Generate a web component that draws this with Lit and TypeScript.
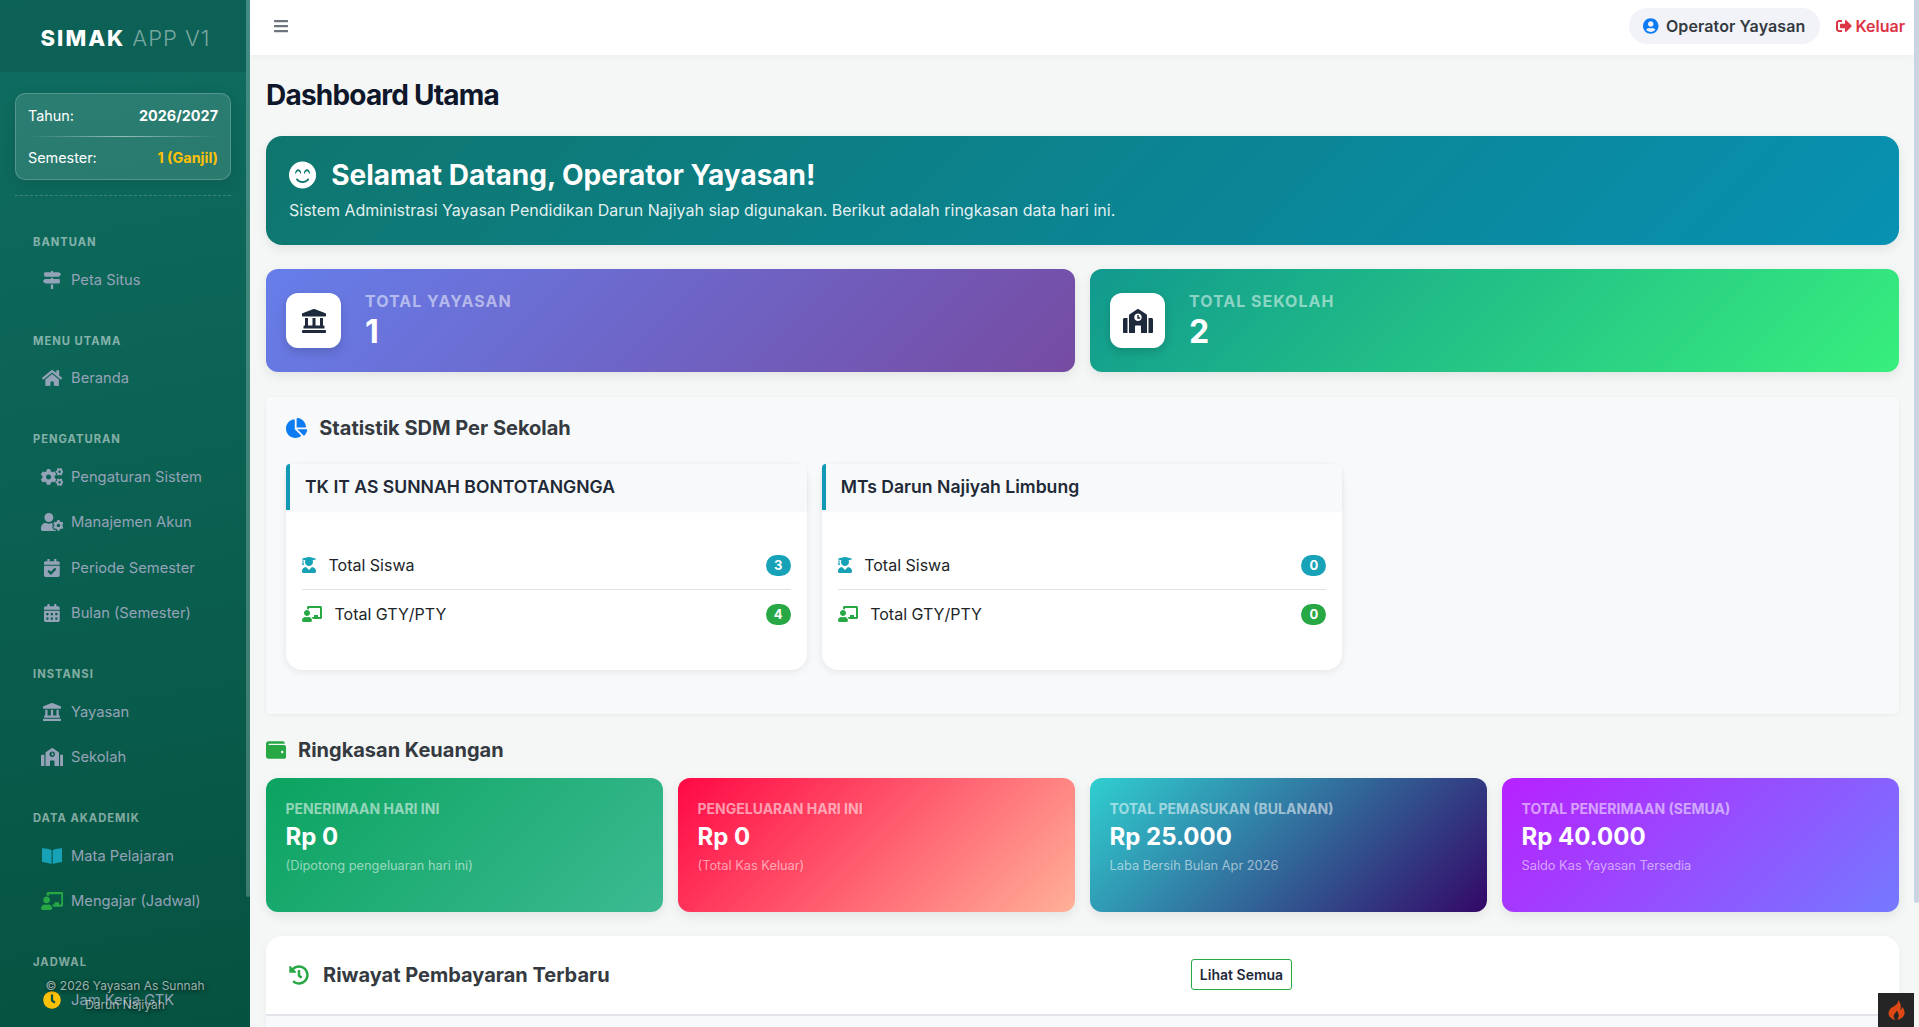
import { LitElement, html, css } from "lit";
import { customElement } from "lit/decorators.js";

// Font Awesome 5 solid shapes, [viewBox width, path]
const ICONS: Record<string, [number, string]> = {
  signs: [512, "M507.31 84.69L464 41.37c-6-6-14.14-9.37-22.63-9.37H288V16c0-8.84-7.16-16-16-16h-32c-8.84 0-16 7.16-16 16v16H56c-13.25 0-24 10.75-24 24v80c0 13.25 10.75 24 24 24h385.37c8.49 0 16.62-3.37 22.63-9.37l43.31-43.31c6.25-6.26 6.25-16.38 0-22.63zM224 496c0 8.84 7.16 16 16 16h32c8.84 0 16-7.16 16-16V384h-64v112zm232-272H288v-32h-64v32H70.63c-8.49 0-16.62 3.37-22.63 9.37L4.69 276.69c-6.25 6.25-6.25 16.38 0 22.63L48 342.63c6 6 14.14 9.37 22.63 9.37H456c13.25 0 24-10.75 24-24v-80c0-13.25-10.75-24-24-24z"],
  home: [576, "M280.37 148.26L96 300.11V464a16 16 0 0 0 16 16l112.06-.29a16 16 0 0 0 15.92-16V368a16 16 0 0 1 16-16h64a16 16 0 0 1 16 16v95.64a16 16 0 0 0 16 16.05L464 480a16 16 0 0 0 16-16V300L295.67 148.26a12.19 12.19 0 0 0-15.3 0zM571.6 251.47L488 182.56V44.05a12 12 0 0 0-12-12h-56a12 12 0 0 0-12 12v72.61L318.47 43a48 48 0 0 0-61 0L4.34 251.47a12 12 0 0 0-1.6 16.9l25.5 31A12 12 0 0 0 45.15 301l235.22-193.74a12.19 12.19 0 0 1 15.3 0L530.9 301a12 12 0 0 0 16.9-1.6l25.5-31a12 12 0 0 0-1.7-16.93z"],
  cogs: [640, "M512.1 191l-8.2 14.3c-3 5.3-9.4 7.5-15.1 5.4-11.8-4.4-22.6-10.7-32.1-18.6-4.6-3.8-5.8-10.5-2.8-15.7l8.2-14.3c-6.9-8-12.3-17.3-15.9-27.4h-16.5c-6 0-11.2-4.3-12.2-10.3-2-12-2.1-24.6 0-37.1 1-6 6.2-10.4 12.2-10.4h16.5c3.6-10.1 9-19.4 15.9-27.4l-8.2-14.3c-3-5.2-1.9-11.9 2.8-15.7 9.5-7.9 20.4-14.2 32.1-18.6 5.7-2.1 12.1.1 15.1 5.4l8.2 14.3c10.5-1.9 21.2-1.9 31.7 0L552 6.3c3-5.3 9.4-7.5 15.1-5.4 11.8 4.4 22.6 10.7 32.1 18.6 4.6 3.8 5.8 10.5 2.8 15.7l-8.2 14.3c6.9 8 12.3 17.3 15.9 27.4h16.5c6 0 11.2 4.3 12.2 10.3 2 12 2.1 24.6 0 37.1-1 6-6.2 10.4-12.2 10.4h-16.5c-3.6 10.1-9 19.4-15.9 27.4l8.2 14.3c3 5.2 1.9 11.9-2.8 15.7-9.5 7.9-20.4 14.2-32.1 18.6-5.7 2.1-12.1-.1-15.1-5.4l-8.2-14.3c-10.4 1.9-21.2 1.9-31.7 0zm-10.5-58.8c38.5 29.6 82.4-14.3 52.8-52.8-38.5-29.7-82.4 14.3-52.8 52.8zM386.3 286.1l33.7 16.8c10.1 5.8 14.5 18.1 10.5 29.1-8.9 24.2-26.4 46.4-42.6 65.8-7.4 8.9-20.2 11.1-30.3 5.3l-29.1-16.8c-16 13.7-34.6 24.6-54.9 31.7v33.6c0 11.6-8.3 21.6-19.7 23.6-24.6 4.2-50.4 4.4-75.9 0-11.5-2-20-11.9-20-23.6V418c-20.3-7.2-38.9-18-54.9-31.7L74 403c-10 5.8-22.9 3.6-30.3-5.3-16.2-19.4-33.3-41.6-42.2-65.7-4-10.9.4-23.2 10.5-29.1l33.3-16.8c-3.9-20.9-3.9-42.4 0-63.4L12 205.8c-10.1-5.8-14.6-18.1-10.5-29 8.9-24.2 26-46.4 42.2-65.8 7.4-8.9 20.2-11.1 30.3-5.3l29.1 16.8c16-13.7 34.6-24.6 54.9-31.7V57.1c0-11.5 8.2-21.5 19.6-23.5 24.6-4.2 50.5-4.4 76-.1 11.5 2 20 11.9 20 23.6v33.6c20.3 7.2 38.9 18 54.9 31.7l29.1-16.8c10-5.8 22.9-3.6 30.3 5.3 16.2 19.4 33.2 41.6 42.1 65.8 4 10.9.1 23.2-10 29.1l-33.7 16.8c3.9 21 3.9 42.5 0 63.5zm-117.6 21.1c59.2-77-28.7-164.9-105.7-105.7-59.2 77 28.7 164.9 105.7 105.7zm243.4 182.7l-8.2 14.3c-3 5.3-9.4 7.5-15.1 5.4-11.8-4.4-22.6-10.7-32.1-18.6-4.6-3.8-5.8-10.5-2.8-15.7l8.2-14.3c-6.9-8-12.3-17.3-15.9-27.4h-16.5c-6 0-11.2-4.3-12.2-10.3-2-12-2.1-24.6 0-37.1 1-6 6.2-10.4 12.2-10.4h16.5c3.6-10.1 9-19.4 15.9-27.4l-8.2-14.3c-3-5.2-1.9-11.9 2.8-15.7 9.5-7.9 20.4-14.2 32.1-18.6 5.7-2.1 12.1.1 15.1 5.4l8.2 14.3c10.5-1.9 21.2-1.9 31.7 0l8.2-14.3c3-5.3 9.4-7.5 15.1-5.4 11.8 4.4 22.6 10.7 32.1 18.6 4.6 3.8 5.8 10.5 2.8 15.7l-8.2 14.3c6.9 8 12.3 17.3 15.9 27.4h16.5c6 0 11.2 4.3 12.2 10.3 2 12 2.1 24.6 0 37.1-1 6-6.2 10.4-12.2 10.4h-16.5c-3.6 10.1-9 19.4-15.9 27.4l8.2 14.3c3 5.2 1.9 11.9-2.8 15.7-9.5 7.9-20.4 14.2-32.1 18.6-5.7 2.1-12.1-.1-15.1-5.4l-8.2-14.3c-10.4 1.9-21.2 1.9-31.7 0zM501.6 431c38.5 29.6 82.4-14.3 52.8-52.8-38.5-29.6-82.4 14.3-52.8 52.8z"],
  userCog: [640, "M610.5 373.3c2.6-14.1 2.6-28.5 0-42.6l25.8-14.9c3-1.7 4.3-5.2 3.3-8.5-6.7-21.6-18.2-41.2-33.2-57.4-2.3-2.5-6-3.1-9-1.4l-25.8 14.9c-10.9-9.3-23.4-16.5-36.9-21.3v-29.8c0-3.4-2.4-6.4-5.7-7.1-22.3-5-45-4.8-66.2 0-3.3.7-5.7 3.7-5.7 7.1v29.8c-13.5 4.8-26 12-36.9 21.3l-25.8-14.9c-2.9-1.7-6.7-1.1-9 1.4-15 16.2-26.5 35.8-33.2 57.4-1 3.3.4 6.8 3.3 8.5l25.8 14.9c-2.6 14.1-2.6 28.5 0 42.6l-25.8 14.9c-3 1.7-4.3 5.2-3.3 8.5 6.7 21.6 18.2 41.1 33.2 57.4 2.3 2.5 6 3.1 9 1.4l25.8-14.9c10.9 9.3 23.4 16.5 36.9 21.3v29.8c0 3.4 2.4 6.4 5.7 7.1 22.3 5 45 4.8 66.2 0 3.3-.7 5.7-3.7 5.7-7.1v-29.8c13.5-4.8 26-12 36.9-21.3l25.8 14.9c2.9 1.7 6.7 1.1 9-1.4 15-16.2 26.5-35.8 33.2-57.4 1-3.3-.4-6.8-3.3-8.5l-25.8-14.9zM496 400.5c-26.8 0-48.5-21.8-48.5-48.5s21.8-48.5 48.5-48.5 48.5 21.8 48.5 48.5-21.7 48.5-48.5 48.5zM224 256c70.7 0 128-57.3 128-128S294.7 0 224 0 96 57.3 96 128s57.3 128 128 128zm201.2 226.5c-2.3-1.2-4.6-2.6-6.8-3.9l-7.9 4.6c-6 3.4-12.8 5.3-19.6 5.3-10.9 0-21.4-4.6-28.9-12.6-18.3-19.8-32.3-43.9-40.2-69.6-5.5-17.7 1.9-36.4 17.9-45.7l7.9-4.6c-.1-2.6-.1-5.2 0-7.8l-7.9-4.6c-16-9.2-23.4-28-17.9-45.7.9-2.9 2.2-5.8 3.2-8.7-3.8-.3-7.5-1.2-11.4-1.2h-16.7c-22.2 10.2-46.9 16-72.9 16s-50.6-5.8-72.9-16h-16.7C60.2 288 0 348.2 0 422.4V464c0 26.5 21.5 48 48 48h352c10.1 0 19.5-3.2 27.2-8.5-1.2-3.8-2-7.7-2-11.8v-9.2z"],
  calCheck: [448, "M436 160H12c-6.627 0-12-5.373-12-12v-36c0-26.51 21.49-48 48-48h48V12c0-6.627 5.373-12 12-12h40c6.627 0 12 5.373 12 12v52h128V12c0-6.627 5.373-12 12-12h40c6.627 0 12 5.373 12 12v52h48c26.51 0 48 21.49 48 48v36c0 6.627-5.373 12-12 12zM12 192h424c6.627 0 12 5.373 12 12v260c0 26.51-21.49 48-48 48H48c-26.51 0-48-21.49-48-48V204c0-6.627 5.373-12 12-12zm333.296 95.947l-28.169-28.398c-4.667-4.705-12.265-4.736-16.97-.068L194.12 364.665l-45.98-46.352c-4.667-4.705-12.266-4.736-16.971-.068l-28.397 28.17c-4.705 4.667-4.736 12.265-.068 16.97l82.601 83.269c4.667 4.705 12.265 4.736 16.97.068l142.953-141.805c4.705-4.667 4.736-12.265.068-16.97z"],
  calAlt: [448, "M0 464c0 26.5 21.5 48 48 48h352c26.5 0 48-21.5 48-48V192H0v272zm320-196c0-6.6 5.4-12 12-12h40c6.6 0 12 5.4 12 12v40c0 6.6-5.4 12-12 12h-40c-6.6 0-12-5.4-12-12v-40zm0 128c0-6.6 5.4-12 12-12h40c6.6 0 12 5.4 12 12v40c0 6.6-5.4 12-12 12h-40c-6.6 0-12-5.4-12-12v-40zM192 268c0-6.6 5.4-12 12-12h40c6.6 0 12 5.4 12 12v40c0 6.6-5.4 12-12 12h-40c-6.6 0-12-5.4-12-12v-40zm0 128c0-6.6 5.4-12 12-12h40c6.6 0 12 5.4 12 12v40c0 6.6-5.4 12-12 12h-40c-6.6 0-12-5.4-12-12v-40zM64 268c0-6.6 5.4-12 12-12h40c6.6 0 12 5.4 12 12v40c0 6.6-5.4 12-12 12H76c-6.6 0-12-5.4-12-12v-40zm0 128c0-6.6 5.4-12 12-12h40c6.6 0 12 5.4 12 12v40c0 6.6-5.4 12-12 12H76c-6.6 0-12-5.4-12-12v-40zM400 64h-48V16c0-8.8-7.2-16-16-16h-32c-8.8 0-16 7.2-16 16v48H160V16c0-8.8-7.2-16-16-16h-32c-8.8 0-16 7.2-16 16v48H48C21.5 64 0 85.5 0 112v48h448v-48c0-26.5-21.5-48-48-48z"],
  landmark: [512, "M501.62 92.11L267.24 2.04a31.958 31.958 0 0 0-22.47 0L10.38 92.11A16.001 16.001 0 0 0 0 107.09V144c0 8.84 7.16 16 16 16h480c8.84 0 16-7.16 16-16v-36.91c0-6.67-4.14-12.64-10.38-14.98zM64 192v160H48c-8.84 0-16 7.16-16 16v48h448v-48c0-8.84-7.16-16-16-16h-16V192h-64v160h-96V192h-64v160h-96V192H64zm432 256H16c-8.84 0-16 7.16-16 16v32c0 8.84 7.16 16 16 16h480c8.84 0 16-7.16 16-16v-32c0-8.84-7.16-16-16-16z"],
  school: [640, "M0 224v272c0 8.84 7.16 16 16 16h80V192H32c-17.67 0-32 14.33-32 32zm360-48h-24v-40c0-4.42-3.58-8-8-8h-16c-4.42 0-8 3.58-8 8v64c0 4.42 3.58 8 8 8h48c4.42 0 8-3.58 8-8v-16c0-4.42-3.58-8-8-8zm137.75-63.96l-160-106.67a32.02 32.02 0 0 0-35.5 0l-160 106.67A32.002 32.002 0 0 0 128 138.66V512h128V368c0-8.84 7.16-16 16-16h96c8.84 0 16 7.16 16 16v144h128V138.67c0-10.7-5.35-20.7-14.25-26.63zM320 256c-44.18 0-80-35.82-80-80s35.82-80 80-80 80 35.82 80 80-35.82 80-80 80zm288-64h-64v320h80c8.84 0 16-7.16 16-16V224c0-17.67-14.33-32-32-32z"],
  book: [576, "M542.22 32.05c-54.8 3.11-163.72 14.43-230.96 55.59-4.64 2.84-7.27 7.89-7.27 13.17v363.87c0 11.55 12.63 18.85 23.28 13.49 69.18-34.82 169.23-44.32 218.7-46.92 16.89-.89 30.02-14.43 30.02-30.66V62.75c.01-17.71-15.35-31.74-33.77-30.7zM264.73 87.64C197.5 46.48 88.58 35.17 33.78 32.05 15.36 31.01 0 45.04 0 62.75V400.6c0 16.24 13.13 29.78 30.02 30.66 49.49 2.6 149.59 12.11 218.77 46.95 10.62 5.35 23.21-1.94 23.21-13.46V100.63c0-5.29-2.62-10.14-7.27-12.99z"],
  teacher: [640, "M208 352c-2.39 0-4.78.35-7.06 1.09C187.98 357.3 174.35 360 160 360c-14.35 0-27.98-2.7-40.95-6.91-2.28-.74-4.66-1.09-7.05-1.09C49.94 352-.33 402.48 0 464.62.14 490.88 21.73 512 48 512h224c26.27 0 47.86-21.12 48-47.38.33-62.14-49.94-112.62-112-112.62zm-48-32c53.02 0 96-42.98 96-96s-42.98-96-96-96-96 42.98-96 96 42.98 96 96 96zM592 0H208c-26.47 0-48 22.25-48 49.59V96c23.42 0 45.1 6.78 64 17.8V64h352v288h-64v-64H384v64h-76.24c19.1 16.69 33.12 38.73 39.69 64H592c26.47 0 48-22.25 48-49.59V49.59C640 22.25 618.47 0 592 0z"],
  graduate: [448, "M319.4 320.6L224 416l-95.4-95.4C57.1 323.7 0 382.2 0 454.4v9.6c0 26.5 21.5 48 48 48h352c26.5 0 48-21.5 48-48v-9.6c0-72.2-57.1-130.7-128.6-133.8zM13.6 79.8l6.4 1.5v58.4c-7 4.2-12 11.5-12 20.3 0 8.4 4.6 15.4 11.1 19.7L3.5 242c-1.7 6.9 2.1 14 7.6 14h41.8c5.5 0 9.3-7.1 7.6-14l-15.6-62.3C51.4 175.4 56 168.4 56 160c0-8.8-5-16.1-12-20.3V87.1l66 15.9c-8.6 17.2-14 36.4-14 57 0 70.7 57.3 128 128 128s128-57.3 128-128c0-20.6-5.3-39.8-14-57l96.3-23.2c18.2-4.4 18.2-27.1 0-31.5l-190.4-46c-13-3.1-26.7-3.1-39.7 0L13.6 48.2c-18.1 4.4-18.1 27.2 0 31.6z"],
  wallet: [512, "M461.2 128H80c-8.84 0-16-7.16-16-16s7.16-16 16-16h384c8.84 0 16-7.16 16-16 0-26.51-21.49-48-48-48H64C28.65 32 0 60.65 0 96v320c0 35.35 28.65 64 64 64h397.2c28.02 0 50.8-21.53 50.8-48V176c0-26.47-22.78-48-50.8-48zM416 336c-17.67 0-32-14.33-32-32s14.33-32 32-32 32 14.33 32 32-14.33 32-32 32z"],
  pie: [544, "M527.79 288H290.5l158.03 158.03c6.04 6.04 15.98 6.53 22.19.68 38.7-36.46 65.32-85.61 73.13-140.86 1.34-9.46-6.51-17.85-16.06-17.85zm-15.83-64.8C503.72 103.74 408.26 8.28 288.8.04 279.68-.59 272 7.1 272 16.24V240h223.77c9.14 0 16.82-7.68 16.19-16.8zM224 288V50.71c0-9.55-8.39-17.4-17.84-16.06C86.99 51.49-4.1 155.6.14 280.37 4.5 408.51 114.83 513.59 243.03 511.98c50.4-.63 96.97-16.87 135.26-44.03 7.9-5.6 8.42-17.23 1.57-24.08L224 288z"],
  history: [512, "M504 255.531c.253 136.64-111.18 248.372-247.82 248.468-59.015.042-113.223-20.53-155.822-54.911-11.077-8.94-11.905-25.541-1.839-35.607l11.267-11.267c8.609-8.609 22.353-9.551 31.891-1.984C173.062 425.135 212.781 440 256 440c101.705 0 184-82.311 184-184 0-101.705-82.311-184-184-184-48.814 0-93.149 18.969-126.068 49.932l50.754 50.754c10.08 10.08 2.941 27.314-11.313 27.314H24c-8.837 0-16-7.163-16-16V38.627c0-14.254 17.234-21.393 27.314-11.314l49.372 49.372C129.209 34.136 189.552 8 256 8c136.81 0 247.747 110.78 248 247.531zm-180.912 78.784l9.823-12.63c8.138-10.463 6.253-25.542-4.21-33.679L288 256.349V152c0-13.255-10.745-24-24-24h-16c-13.255 0-24 10.745-24 24v135.651l65.409 50.874c10.463 8.137 25.541 6.253 33.679-4.21z"],
  userCircle: [496, "M248 8C111 8 0 119 0 256s111 248 248 248 248-111 248-248S385 8 248 8zm0 96c48.6 0 88 39.4 88 88s-39.4 88-88 88-88-39.4-88-88 39.4-88 88-88zm0 344c-58.7 0-111.3-26.6-146.5-68.2 18.8-35.4 55.6-59.8 98.5-59.8 2.4 0 4.8.4 7.1 1.1 13 4.2 26.6 6.9 40.9 6.9 14.3 0 28-2.7 40.9-6.9 2.3-.7 4.7-1.1 7.1-1.1 42.9 0 79.7 24.4 98.5 59.8C359.3 421.4 306.7 448 248 448z"],
  signOut: [512, "M497 273L329 441c-15 15-41 4.5-41-17v-96H152c-13.3 0-24-10.7-24-24v-96c0-13.3 10.7-24 24-24h136V88c0-21.4 25.9-32 41-17l168 168c9.3 9.4 9.3 24.6 0 34zM192 436v-40c0-6.6-5.4-12-12-12H96c-17.7 0-32-14.3-32-32V160c0-17.7 14.3-32 32-32h84c6.6 0 12-5.4 12-12V76c0-6.6-5.4-12-12-12H96c-53 0-96 43-96 96v192c0 53 43 96 96 96h84c6.6 0 12-5.4 12-12z"],
  smile: [496, "M248 8C111 8 0 119 0 256s111 248 248 248 248-111 248-248S385 8 248 8zM112 223.4c3.3-42.1 32.2-71.4 56-71.4s52.7 29.3 56 71.4c.7 8.6-10.8 11.9-14.9 4.5l-9.5-17c-7.7-13.7-19.2-21.6-31.5-21.6s-23.8 7.9-31.5 21.6l-9.5 17c-4.2 7.4-15.6 4.1-15.1-4.5zm250.8 122.8C334.3 380.4 292.5 400 248 400s-86.3-19.6-114.8-53.8c-13.5-16.3 11-36.7 24.6-20.5 22.4 26.9 55.2 42.2 90.2 42.2s67.8-15.4 90.2-42.2c13.6-16.2 38.1 4.3 24.6 20.5zm6.2-118.3l-9.5-17c-7.7-13.7-19.2-21.6-31.5-21.6s-23.8 7.9-31.5 21.6l-9.5 17c-4.1 7.3-15.6 4-14.9-4.5 3.3-42.1 32.2-71.4 56-71.4s52.7 29.3 56 71.4c.6 8.6-11 11.9-15.1 4.5z"],
  clock: [512, "M256,8C119,8,8,119,8,256S119,504,256,504,504,393,504,256,393,8,256,8Zm92.49,313h0l-20,25a16,16,0,0,1-22.49,2.5h0l-67-49.72a40,40,0,0,1-15-31.23V112a16,16,0,0,1,16-16h32a16,16,0,0,1,16,16V256l58,42.5A16,16,0,0,1,348.49,321Z"],
  bars: [448, "M16 132h416c8.837 0 16-7.163 16-16V76c0-8.837-7.163-16-16-16H16C7.163 60 0 67.163 0 76v40c0 8.837 7.163 16 16 16zm0 160h416c8.837 0 16-7.163 16-16v-40c0-8.837-7.163-16-16-16H16c-8.837 0-16 7.163-16 16v40c0 8.837 7.163 16 16 16zm0 160h416c8.837 0 16-7.163 16-16v-40c0-8.837-7.163-16-16-16H16c-8.837 0-16 7.163-16 16v40c0 8.837 7.163 16 16 16z"],
};

const icon = (name: string, size: number, color = "currentColor") => {
  const [w, d] = ICONS[name];
  return html`<svg class="ic" viewBox="0 0 ${w} 512" height=${size} width=${(size * w) / 512} fill=${color}><path d=${d}></path></svg>`;
};

type NavItem = { label: string; icon: string; color?: string };
const NAV: { title: string; items: NavItem[] }[] = [
  { title: "Bantuan", items: [{ label: "Peta Situs", icon: "signs" }] },
  { title: "Menu Utama", items: [{ label: "Beranda", icon: "home" }] },
  {
    title: "Pengaturan",
    items: [
      { label: "Pengaturan Sistem", icon: "cogs" },
      { label: "Manajemen Akun", icon: "userCog" },
      { label: "Periode Semester", icon: "calCheck" },
      { label: "Bulan (Semester)", icon: "calAlt" },
    ],
  },
  {
    title: "Instansi",
    items: [
      { label: "Yayasan", icon: "landmark" },
      { label: "Sekolah", icon: "school" },
    ],
  },
  {
    title: "Data Akademik",
    items: [
      { label: "Mata Pelajaran", icon: "book", color: "#17a2b8" },
      { label: "Mengajar (Jadwal)", icon: "teacher", color: "#28a745" },
    ],
  },
  { title: "Jadwal", items: [{ label: "Jam Kerja GTK", icon: "clock", color: "#ffc107" }] },
];

const SCHOOLS = [
  { name: "TK IT AS SUNNAH BONTOTANGNGA", siswa: 3, gty: 4 },
  { name: "MTs Darun Najiyah Limbung", siswa: 0, gty: 0 },
];

const FINANCE = [
  { cls: "f1", label: "Penerimaan Hari Ini", value: "Rp 0", note: "(Dipotong pengeluaran hari ini)" },
  { cls: "f2", label: "Pengeluaran Hari Ini", value: "Rp 0", note: "(Total Kas Keluar)" },
  { cls: "f3", label: "Total Pemasukan (Bulanan)", value: "Rp 25.000", note: "Laba Bersih Bulan Apr 2026" },
  { cls: "f4", label: "Total Penerimaan (Semua)", value: "Rp 40.000", note: "Saldo Kas Yayasan Tersedia" },
];

@customElement("app-root")
export class AppRoot extends LitElement {
  static styles = css`
    :host {
      display: flex;
      height: 100vh;
      overflow: hidden;
      font-family: Inter, "Liberation Sans", sans-serif;
      color: #212529;
      background: #f5f6f6;
    }
    * {
      box-sizing: border-box;
    }
    .ic {
      display: block;
      flex: none;
    }

    /* sidebar */
    .sidebar {
      position: relative;
      width: 250px;
      flex: none;
      height: 100%;
      overflow: hidden;
      padding-right: 4px;
      background: linear-gradient(170deg, #0f6e62, #065240);
    }
    /* scrollbar thumb, the screenshot browser hides real ones */
    .sidebar::after {
      content: "";
      position: absolute;
      top: 0;
      right: 0;
      width: 4px;
      height: 897px;
      border-radius: 0 0 2px 2px;
      background: rgba(255, 255, 255, 0.22);
    }
    .brand {
      height: 72px;
      padding: 3px 0 0 5px;
      display: flex;
      align-items: center;
      justify-content: center;
      gap: 7px;
      background: rgba(0, 0, 0, 0.1);
      font-size: 22px;
      letter-spacing: 1px;
    }
    .brand b {
      color: #fff;
      font-weight: 800;
      letter-spacing: 2px;
    }
    .brand span {
      color: rgba(255, 255, 255, 0.45);
      font-weight: 300;
    }
    .period {
      margin: 21px 15px 0;
      padding: 13px 12px;
      height: 87px;
      border-radius: 10px;
      background: rgba(255, 255, 255, 0.12);
      border: 1px solid rgba(255, 255, 255, 0.2);
      box-shadow: 0 4px 15px rgba(0, 0, 0, 0.1);
      font-size: 14.4px;
      color: #fff;
    }
    .period-row {
      display: flex;
      justify-content: space-between;
      line-height: 18px;
    }
    .period-row b {
      font-weight: 700;
    }
    .period-row .gold {
      color: #ffc107;
    }
    .period-line {
      height: 1px;
      margin: 11px 0 12px;
      background: linear-gradient(90deg, transparent, rgba(255, 255, 255, 0.5), transparent);
    }
    .dash {
      margin: 15px 15px 0;
      border-bottom: 1px dashed rgba(255, 255, 255, 0.2);
    }
    .nav {
      padding-top: 39px;
    }
    .nav-sec {
      margin-bottom: 31px;
    }
    .nav-title {
      margin-left: 33px;
      height: 14px;
      line-height: 14px;
      font-size: 11.2px;
      font-weight: 700;
      letter-spacing: 1px;
      text-transform: uppercase;
      color: rgba(255, 255, 255, 0.5);
      margin-bottom: 8px;
    }
    .nav-item {
      height: 45.5px;
      display: flex;
      align-items: center;
      gap: 6px;
      padding-left: 39px;
      font-size: 14.72px;
      color: #94a3b8;
    }
    .nav-ic {
      width: 26px;
      display: flex;
      justify-content: center;
    }
    .side-foot {
      position: absolute;
      left: 0;
      right: 0;
      bottom: 13px;
      text-align: center;
      font-size: 12px;
      line-height: 18.5px;
      color: rgba(255, 255, 255, 0.6);
      text-shadow: 1px 1px 4px rgba(0, 0, 0, 0.8);
      pointer-events: none;
      padding: 0 40px;
    }

    /* main column */
    .main {
      position: relative;
      flex: 1;
      min-width: 0;
      height: 100%;
      overflow: hidden;
      padding-right: 5px;
    }
    .main::after {
      content: "";
      position: absolute;
      top: 0;
      right: 0;
      width: 5px;
      height: 903px;
      border-radius: 0 0 3px 3px;
      background: #cbd5e1;
    }
    .topbar {
      height: 55px;
      background: #fff;
      display: flex;
      align-items: center;
      padding: 0 9px 3px 24px;
      box-shadow: 0 2px 6px rgba(0, 0, 0, 0.03);
      color: #6c757d;
    }
    .user {
      margin-left: auto;
      height: 36px;
      display: flex;
      align-items: center;
      gap: 7px;
      padding: 0 15px 0 14.5px;
      border-radius: 18px;
      background: #f1f3f9;
      color: #343a40;
      font-size: 16px;
      letter-spacing: 0.1px;
      font-weight: 600;
    }
    .logout {
      margin-left: 16px;
      display: flex;
      align-items: center;
      gap: 3px;
      color: #dc3545;
      font-size: 16px;
      font-weight: 600;
    }
    .content {
      padding: 20px 15px 20px 16px;
    }
    h1 {
      margin: 0;
      height: 41px;
      line-height: 41px;
      font-size: 28px;
      font-weight: 700;
      letter-spacing: -0.8px;
      color: #0f172a;
    }
    .welcome {
      margin-top: 20px;
      height: 109px;
      padding: 23px;
      border-radius: 16px;
      background: linear-gradient(135deg, #0f766e, #0891b2);
      box-shadow: 0 4px 12px rgba(0, 0, 0, 0.08);
      color: #fff;
    }
    .welcome-head {
      display: flex;
      align-items: center;
      gap: 15px;
      height: 32px;
      font-size: 28px;
      font-weight: 700;
    }
    .welcome p {
      margin: 8px 0 0;
      font-size: 16px;
      line-height: 22px;
      color: rgba(255, 255, 255, 0.9);
    }
    .stats {
      margin-top: 24px;
      display: grid;
      grid-template-columns: 1fr 1fr;
      gap: 15px;
    }
    .stat {
      height: 103px;
      border-radius: 12px;
      padding: 24px 20px;
      display: flex;
      align-items: center;
      gap: 24px;
      color: #fff;
      box-shadow: 0 4px 12px rgba(0, 0, 0, 0.08);
    }
    .stat.a {
      background: linear-gradient(135deg, #667eea, #764ba2);
    }
    .stat.b {
      background: linear-gradient(135deg, #11998e, #38ef7d);
    }
    .stat-ic {
      width: 55px;
      height: 55px;
      border-radius: 12px;
      background: #fff;
      display: flex;
      align-items: center;
      justify-content: center;
      box-shadow: 0 4px 10px rgba(0, 0, 0, 0.15);
    }
    .stat-label {
      font-size: 16px;
      font-weight: 700;
      line-height: 20px;
      letter-spacing: 1px;
      text-transform: uppercase;
      color: rgba(255, 255, 255, 0.5);
    }
    .stat-value {
      margin-top: 2px;
      font-size: 32px;
      line-height: 38px;
      font-weight: 700;
    }
    .panel {
      margin-top: 25px;
      padding: 19px 21px 20px 20px;
      height: 317px;
      background: #f8f9fa;
      border-radius: 4px;
      box-shadow: 0 1px 4px rgba(0, 0, 0, 0.05);
    }
    .sec-head {
      display: flex;
      align-items: center;
      gap: 12px;
      font-size: 20px;
      font-weight: 700;
      line-height: 24px;
      color: #343a40;
    }
    .school-grid {
      margin-top: 24px;
      display: grid;
      grid-template-columns: repeat(3, 1fr);
      gap: 15px;
    }
    .school {
      background: #fff;
      border-radius: 16px;
      height: 206px;
      box-shadow: 0 2px 8px rgba(0, 0, 0, 0.08);
    }
    .school-head {
      height: 46px;
      display: flex;
      align-items: center;
      padding: 0 0 1px 15px;
      background: #f8f9fa;
      border-left: 4px solid #1199b8;
      border-radius: 4px 4px 0 0;
      box-shadow: 0 1px 3px rgba(0, 0, 0, 0.06);
      font-size: 17.6px;
      font-weight: 600;
      color: #212936;
    }
    .school-body {
      padding: 31px 16px 32px;
    }
    .row {
      height: 48px;
      display: flex;
      align-items: center;
      gap: 12.5px;
      font-size: 16px;
      color: #212529;
    }
    .rule {
      height: 1px;
      background: #dee2e6;
    }
    .badge {
      margin-left: auto;
      min-width: 25px;
      height: 21px;
      padding: 0 8px;
      border-radius: 11px;
      display: flex;
      align-items: center;
      justify-content: center;
      font-size: 13px;
      font-weight: 700;
      color: #fff;
    }
    .badge.info {
      background: #17a2b8;
    }
    .badge.ok {
      background: #28a745;
    }
    .fin-head {
      margin-top: 24px;
    }
    .fin-grid {
      margin-top: 16px;
      display: grid;
      grid-template-columns: repeat(4, 1fr);
      gap: 15px;
    }
    .fin {
      height: 134px;
      padding: 22px 20px 22px 19.5px;
      border-radius: 12px;
      color: #fff;
      box-shadow: 0 4px 12px rgba(0, 0, 0, 0.08);
    }
    .fin.f1 {
      background: linear-gradient(135deg, #0ba360, #3cba92);
    }
    .fin.f2 {
      background: linear-gradient(135deg, #ff0844, #ffb199);
    }
    .fin.f3 {
      background: linear-gradient(135deg, #30cfd0, #330867);
    }
    .fin.f4 {
      background: linear-gradient(135deg, #b721ff, #7579ff);
    }
    .fin-label {
      font-size: 14px;
      line-height: 18px;
      font-weight: 700;
      text-transform: uppercase;
      color: rgba(255, 255, 255, 0.55);
    }
    .fin-value {
      margin-top: 3px;
      font-size: 24px;
      line-height: 32px;
      font-weight: 700;
    }
    .fin-note {
      margin-top: 4px;
      font-size: 12.8px;
      line-height: 18px;
      color: rgba(255, 255, 255, 0.55);
    }
    .history {
      margin-top: 24px;
      height: 212px;
      background: #fff;
      border-radius: 16px;
      overflow: hidden;
      box-shadow: 0 4px 12px rgba(0, 0, 0, 0.04);
    }
    .history-head {
      height: 80px;
      display: flex;
      align-items: center;
      padding-left: 23px;
      border-bottom: 2px solid #e2e6ea;
    }
    .history-title {
      flex: 0 0 902px;
      gap: 14px;
    }
    .more {
      width: 101px;
      height: 31px;
      margin-top: -1px;
      border: 1px solid #28a745;
      border-radius: 3px;
      background: #fff;
      display: flex;
      align-items: center;
      justify-content: center;
      font-size: 14px;
      font-weight: 600;
      color: #1e293b;
    }
    .thead {
      height: 40px;
      background: #f8f9fa;
    }

    /* debug toolbar badge */
    .flame {
      position: fixed;
      right: 5px;
      bottom: 0;
      width: 36px;
      height: 34px;
      background: #252525;
      display: flex;
      align-items: center;
      justify-content: center;
      z-index: 5;
    }
  `;

  private renderSchool(s: { name: string; siswa: number; gty: number }) {
    return html`
      <div class="school">
        <div class="school-head">${s.name}</div>
        <div class="school-body">
          <div class="row">
            ${icon("graduate", 16, "#17a2b8")}<span>Total Siswa</span>
            <span class="badge info">${s.siswa}</span>
          </div>
          <div class="rule"></div>
          <div class="row">
            ${icon("teacher", 16, "#28a745")}<span>Total GTY/PTY</span>
            <span class="badge ok">${s.gty}</span>
          </div>
        </div>
      </div>
    `;
  }

  render() {
    return html`
      <aside class="sidebar">
        <div class="brand"><b>SIMAK</b><span>APP V1</span></div>
        <div class="period">
          <div class="period-row"><span>Tahun:</span><b>2026/2027</b></div>
          <div class="period-line"></div>
          <div class="period-row"><span>Semester:</span><b class="gold">1 (Ganjil)</b></div>
        </div>
        <div class="dash"></div>
        <nav class="nav">
          ${NAV.map(
            (sec) => html`
              <div class="nav-sec">
                <div class="nav-title">${sec.title}</div>
                ${sec.items.map(
                  (it) => html`
                    <div class="nav-item">
                      <span class="nav-ic">${icon(it.icon, 18, it.color)}</span>
                      <span>${it.label}</span>
                    </div>
                  `
                )}
              </div>
            `
          )}
        </nav>
        <div class="side-foot">© 2026 Yayasan As Sunnah Darun Najiyah</div>
      </aside>

      <div class="main">
        <header class="topbar">
          ${icon("bars", 16)}
          <div class="user">${icon("userCircle", 16, "#0d7bf2")}<span>Operator Yayasan</span></div>
          <div class="logout">${icon("signOut", 16)}<span>Keluar</span></div>
        </header>

        <main class="content">
          <h1>Dashboard Utama</h1>

          <section class="welcome">
            <div class="welcome-head">${icon("smile", 28, "#fff")}<span>Selamat Datang, Operator Yayasan!</span></div>
            <p>Sistem Administrasi Yayasan Pendidikan Darun Najiyah siap digunakan. Berikut adalah ringkasan data hari ini.</p>
          </section>

          <section class="stats">
            <div class="stat a">
              <div class="stat-ic">${icon("landmark", 24, "#1e293b")}</div>
              <div>
                <div class="stat-label">Total Yayasan</div>
                <div class="stat-value">1</div>
              </div>
            </div>
            <div class="stat b">
              <div class="stat-ic">${icon("school", 24, "#1e293b")}</div>
              <div>
                <div class="stat-label">Total Sekolah</div>
                <div class="stat-value">2</div>
              </div>
            </div>
          </section>

          <section class="panel">
            <div class="sec-head">${icon("pie", 20, "#0d7bf2")}<span>Statistik SDM Per Sekolah</span></div>
            <div class="school-grid">${SCHOOLS.map((s) => this.renderSchool(s))}</div>
          </section>

          <div class="sec-head fin-head">${icon("wallet", 20, "#28a745")}<span>Ringkasan Keuangan</span></div>
          <section class="fin-grid">
            ${FINANCE.map(
              (f) => html`
                <div class="fin ${f.cls}">
                  <div class="fin-label">${f.label}</div>
                  <div class="fin-value">${f.value}</div>
                  <div class="fin-note">${f.note}</div>
                </div>
              `
            )}
          </section>

          <section class="history">
            <div class="history-head">
              <div class="sec-head history-title">${icon("history", 20, "#28a745")}<span>Riwayat Pembayaran Terbaru</span></div>
              <div class="more">Lihat Semua</div>
            </div>
            <div class="thead"></div>
          </section>
        </main>
      </div>

      <div class="flame">
        <svg viewBox="0 0 17 20" width="17" height="20" fill="#dd4814">
          <path d="M10 0C11 4 6 6 3 8 0 11 0 15 2 17 3.500 18.800 6 20 7.500 20 5.500 18 5 16 6.500 14 7.500 12.500 8.500 12 8.500 10.500 10 12 11.500 14.500 10.500 17 10 18.500 9.500 19.500 9 20 12 19.500 15.500 17.500 16.500 14 17 11 15.500 8 14 7 14 8.500 13.500 9.500 12.500 10 13.500 6 12.500 2.500 10 0Z"></path>
        </svg>
      </div>
    `;
  }
}
